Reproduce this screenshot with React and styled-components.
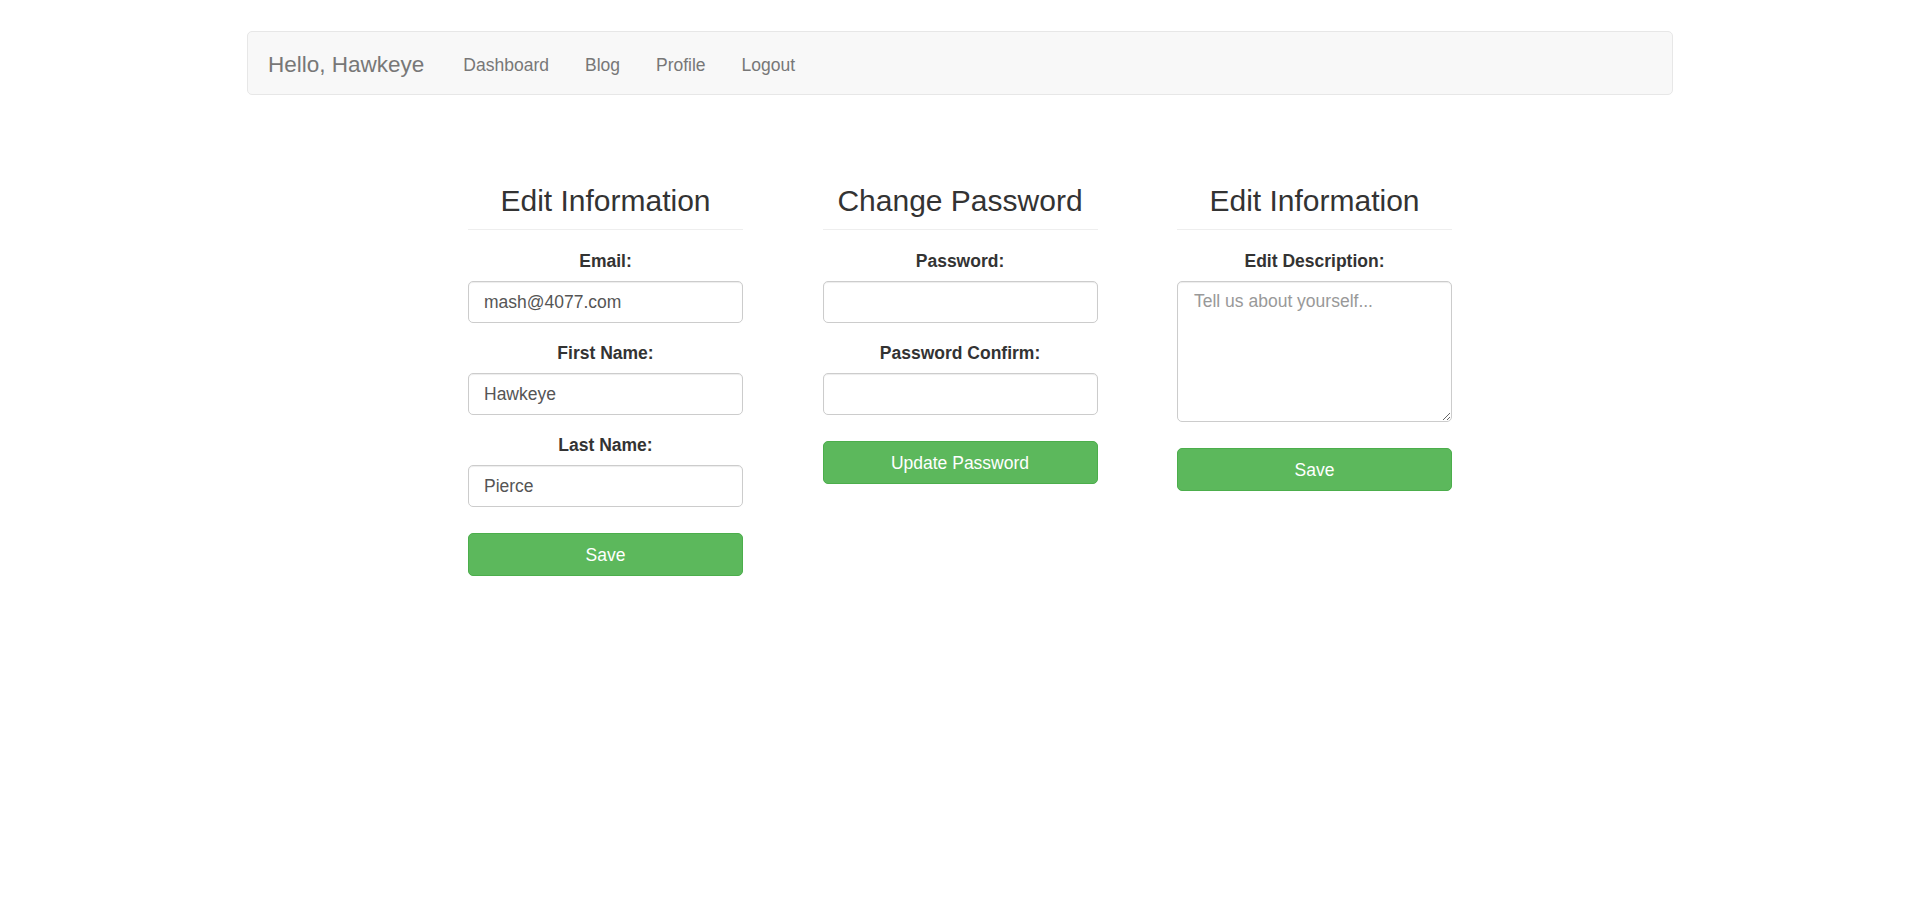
import React from "react";
import styled, { createGlobalStyle } from "styled-components";

const GlobalStyle = createGlobalStyle`
  html, body {
    margin: 0;
    padding: 0;
    background: #ffffff;
  }
  body {
    font-family: "Liberation Sans", Arial, Helvetica, sans-serif;
    font-size: 17.5px;
    line-height: 24px;
    color: #333333;
  }
  * {
    box-sizing: border-box;
  }
`;

const Page = styled.div`
  width: 1426px;
  margin: 31px auto 0;
`;

const Navbar = styled.nav`
  height: 64px;
  display: flex;
  align-items: center;
  padding-top: 3px;
  background-color: #f8f8f8;
  border: 1px solid #e7e7e7;
  border-radius: 5px;
`;

const Brand = styled.a`
  font-size: 22.5px;
  line-height: 24px;
  color: #777777;
  padding: 0 21px 0 20px;
  text-decoration: none;
`;

const NavList = styled.ul`
  display: flex;
  list-style: none;
  margin: 0;
  padding: 0;
`;

const NavLink = styled.a`
  display: block;
  padding: 0 18px;
  font-size: 17.5px;
  line-height: 24px;
  color: #777777;
  text-decoration: none;
`;

const Main = styled.main`
  display: flex;
  justify-content: center;
  gap: 79.5px;
  padding-top: 90px;
`;

const Column = styled.section`
  width: 275px;
  display: flex;
  flex-direction: column;
  text-align: center;
`;

const Title = styled.h3`
  margin: 0;
  font-size: 30px;
  line-height: 32px;
  font-weight: 400;
  color: #333333;
`;

const Divider = styled.hr`
  margin: 12px 0 19px;
  border: 0;
  border-top: 1px solid #eeeeee;
`;

const Field = styled.div`
  display: flex;
  flex-direction: column;
  margin-bottom: 18px;
`;

const Label = styled.label`
  font-weight: 700;
  font-size: 17.5px;
  line-height: 24px;
  margin-bottom: 8px;
  color: #333333;
`;

const Input = styled.input`
  width: 100%;
  height: 42px;
  padding: 0 15px;
  font-family: inherit;
  font-size: 17.5px;
  color: #555555;
  background: #ffffff;
  border: 1px solid #cccccc;
  border-radius: 5px;
  box-shadow: inset 0 1px 1px rgba(0, 0, 0, 0.075);
  outline: none;
`;

const TextArea = styled.textarea`
  width: 100%;
  height: 141px;
  padding: 7px 16px;
  font-family: inherit;
  font-size: 17.5px;
  line-height: 24px;
  color: #555555;
  background: #ffffff;
  border: 1px solid #cccccc;
  border-radius: 5px;
  box-shadow: inset 0 1px 1px rgba(0, 0, 0, 0.075);
  outline: none;
  display: block;
  &::placeholder {
    color: #999999;
  }
`;

const Button = styled.button`
  width: 100%;
  height: 43px;
  margin-top: ${(p) => p.$offset || 8}px;
  font-family: inherit;
  font-size: 17.5px;
  line-height: 24px;
  color: #ffffff;
  background-color: #5cb85c;
  border: 1px solid #4cae4c;
  border-radius: 5px;
  cursor: pointer;
`;

export default function App() {
  return (
    <>
      <GlobalStyle />
      <Page>
        <Navbar>
          <Brand href="#">Hello, Hawkeye</Brand>
          <NavList>
            <li><NavLink href="#">Dashboard</NavLink></li>
            <li><NavLink href="#">Blog</NavLink></li>
            <li><NavLink href="#">Profile</NavLink></li>
            <li><NavLink href="#">Logout</NavLink></li>
          </NavList>
        </Navbar>
      </Page>
      <Main>
        <Column>
          <Title>Edit Information</Title>
          <Divider />
          <Field>
            <Label>Email:</Label>
            <Input type="text" defaultValue="mash@4077.com" />
          </Field>
          <Field>
            <Label>First Name:</Label>
            <Input type="text" defaultValue="Hawkeye" />
          </Field>
          <Field>
            <Label>Last Name:</Label>
            <Input type="text" defaultValue="Pierce" />
          </Field>
          <Button $offset={8}>Save</Button>
        </Column>
        <Column>
          <Title>Change Password</Title>
          <Divider />
          <Field>
            <Label>Password:</Label>
            <Input type="password" />
          </Field>
          <Field>
            <Label>Password Confirm:</Label>
            <Input type="password" />
          </Field>
          <Button $offset={8}>Update Password</Button>
        </Column>
        <Column>
          <Title>Edit Information</Title>
          <Divider />
          <Field>
            <Label>Edit Description:</Label>
            <TextArea placeholder="Tell us about yourself..." />
          </Field>
          <Button $offset={8}>Save</Button>
        </Column>
      </Main>
    </>
  );
}
